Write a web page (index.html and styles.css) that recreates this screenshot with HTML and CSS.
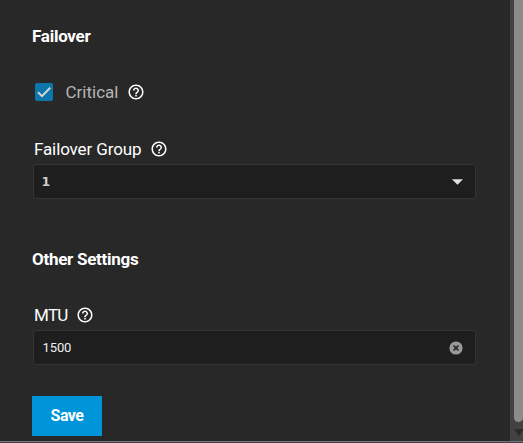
FILE: index.html
```html
<!DOCTYPE html>
<html lang="en">
<head>
<meta charset="utf-8">
<title>Interface settings</title>
<link rel="stylesheet" href="styles.css">
</head>
<body>
<svg class="defs" aria-hidden="true">
<symbol id="help" viewBox="0 0 24 24"><path d="M11 18h2v-2h-2v2zm1-16C6.480 2 2 6.480 2 12s4.480 10 10 10 10-4.480 10-10S17.520 2 12 2zm0 18c-4.410 0-8-3.590-8-8s3.590-8 8-8 8 3.590 8 8-3.590 8-8 8zm0-14c-2.210 0-4 1.790-4 4h2c0-1.100.9-2 2-2s2 .9 2 2c0 2-3 1.750-3 5h2c0-2.250 3-2.500 3-5 0-2.210-1.790-4-4-4z"/></symbol>
</svg>
<div class="window">
<form class="panel">
<h2 class="heading failover-title">Failover</h2>
<div class="check-row"><span class="checkbox"><svg viewBox="0 0 18 18"><path d="M3 9.300 7 13.200 15.200 4.800"/></svg></span><span class="critical">Critical</span><svg class="help"><use href="#help"/></svg></div>
<div class="label-row"><span class="label group-label">Failover Group</span><svg class="help"><use href="#help"/></svg></div>
<div class="field"><span class="option">1</span><svg class="arrow" viewBox="0 0 12 6"><path d="M0 0h12L6 6z"/></svg></div>
<h2 class="heading other-title">Other Settings</h2>
<div class="label-row mtu-row"><span class="label mtu-label">MTU</span><svg class="help"><use href="#help"/></svg></div>
<div class="field"><span class="number">1500</span><svg class="clear" viewBox="0 0 14 14"><circle cx="7" cy="7" r="6.600"/><path d="m4.500 4.500 5 5m0-5-5 5"/></svg></div>
<button class="save" type="button"><span>Save</span></button>
</form>
<div class="track"><div class="thumb"></div><svg class="down" viewBox="0 0 10 8"><path d="M0 0h10L5 7z"/></svg></div>
</div>
<div class="bottom"></div>
</body>
</html>
```
FILE: styles.css
```css
* { box-sizing: border-box; }
body { margin: 0; height: 443px; overflow: hidden; background: #282828; color: #fff; font-family: Roboto, "Liberation Sans", sans-serif; }
.defs { position: absolute; width: 0; height: 0; }
svg { display: block; flex: none; }
.window { display: flex; height: 441px; }
.panel { width: 510px; padding: 24px 34px 0 32px; margin: 0; }
.heading { height: 24px; margin: 0; font: 700 17px/24px Roboto, sans-serif; white-space: nowrap; }
.failover-title { letter-spacing: -.25px; }
.other-title { margin-top: 48px; letter-spacing: -.28px; }
.check-row { display: flex; align-items: center; height: 24px; margin-top: 32px; padding-left: 3px; }
.checkbox { width: 18px; height: 18px; border-radius: 2px; background: #0d76aa; }
.checkbox path { fill: none; stroke: #d5d5d5; stroke-width: 2; }
.critical { width: 53px; margin-left: 12.5px; color: #b6b6b6; font-size: 17px; line-height: 24px; white-space: nowrap; }
.help { width: 18px; height: 18px; margin-left: 8px; fill: #fff; }
.check-row .help { margin-left: 8.500px; }
.label-row { display: flex; align-items: center; height: 24px; margin: 33px 0 3px 2px; }
.label { font-size: 17px; line-height: 24px; letter-spacing: -.12px; white-space: nowrap; }
.group-label { width: 108px; }
.label-row .help { margin-left: 7.500px; }
.mtu-row { margin-top: 32px; }
.mtu-label { width: 34px; letter-spacing: -.7px; }
.field { display: flex; align-items: center; justify-content: space-between; width: 443px; height: 35px; margin-left: 1px; padding: 0 12px 0 8.500px; border: 1px solid #353535; border-radius: 3px; background: #1e1e1e; }
.option { color: #ccc; font: 700 12.500px/20px "DejaVu Sans", sans-serif; margin-left: -1px; }
.number { color: #eee; font-size: 13px; line-height: 20px; letter-spacing: -.1px; }
.arrow { width: 11px; height: 6px; fill: #e0e0e0; }
.clear { width: 14px; height: 14px; fill: #999; }
.clear path { stroke: #1e1e1e; stroke-width: 1.600; }
.save { display: flex; align-items: center; justify-content: center; width: 70px; height: 40px; margin-top: 31px; padding: 0; border: 0; background: #0095d8; color: #fff; font: 700 16px/24px Roboto, sans-serif; letter-spacing: -.5px; }
.track { display: flex; flex-direction: column; width: 13px; padding-left: 4px; background: #424242; }
.thumb { width: 9px; height: 422px; border-radius: 0 0 5px 5px; background: #8b8b8b; }
.down { width: 10px; height: 8px; margin-top: 7px; fill: #2b2b2b; }
.bottom { height: 2px; border-top: 1px solid #76747a; background: #454148; }
```
